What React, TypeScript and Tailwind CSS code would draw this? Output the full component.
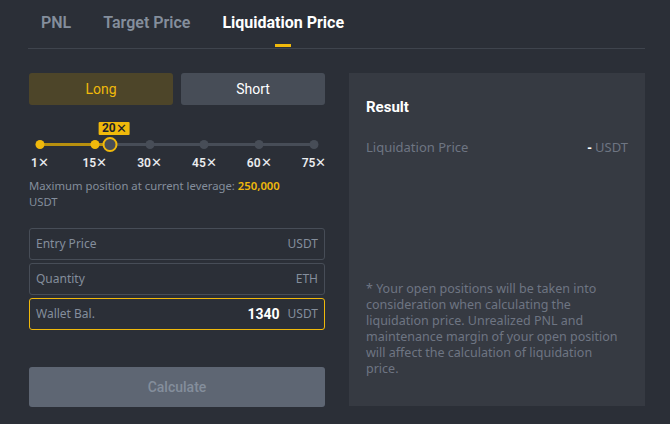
import React from "react";

const marks = [1, 15, 30, 45, 60, 75];

export default function App() {
  const pct = ((20 - 1) / 74) * 100;
  return (
    <div className="w-[670px] h-[424px] bg-[#2b2f37] overflow-hidden" style={{ fontFamily: "'Noto Sans', Roboto, sans-serif" }}>
      <div className="pl-[28px] pr-[25px]" style={{ fontFamily: "Roboto, sans-serif" }}>
        <div className="flex items-end h-[49px] border-b border-[#3f444d] pl-[13px] gap-[32px]">
          <div className="pb-[17px] text-[16px] font-semibold text-[#848e9c] leading-none">PNL</div>
          <div className="pb-[17px] text-[16px] font-semibold text-[#848e9c] leading-none">Target Price</div>
          <div className="relative pb-[17px] text-[16px] font-bold text-white leading-none">
            Liquidation Price
            <div className="absolute bottom-[1px] left-1/2 -translate-x-1/2 w-[16px] h-[3px] bg-[#f0b90b]" />
          </div>
        </div>
      </div>
      <div className="flex gap-[24px] pl-[29px] pt-[24px]">
        <div className="w-[296px] flex flex-col">
          <div className="flex gap-[8px]" style={{ fontFamily: "Roboto, sans-serif" }}>
            <div className="flex-1 h-[32px] rounded-[3px] bg-[#4d4529] text-[#f0b90b] text-[14px] flex items-center justify-center">Long</div>
            <div className="flex-1 h-[32px] rounded-[3px] bg-[#474d57] text-white text-[14px] flex items-center justify-center">Short</div>
          </div>
          <div className="relative mt-[13px] h-[44px] mx-[11px]" style={{ fontFamily: "Roboto, sans-serif" }}>
            <div className="absolute left-0 right-0 top-[25px] h-[3px] bg-[#474d57]" />
            <div className="absolute left-0 top-[25px] h-[3px] bg-[#b8900f]" style={{ width: `${pct}%` }} />
            {marks.map((m, i) => (
              <div
                key={m}
                className={`absolute top-[22px] w-[9px] h-[9px] rounded-full -translate-x-1/2 ${m <= 20 ? "bg-[#f0b90b]" : "bg-[#474d57]"}`}
                style={{ left: `${(i / 5) * 100}%` }}
              />
            ))}
            <div
              className="absolute top-[19px] w-[15px] h-[15px] rounded-full border-2 border-[#f0b90b] bg-[#474d57] -translate-x-1/2"
              style={{ left: `${pct}%` }}
            />
            <div
              className="absolute top-[4px] h-[13px] px-[3px] ml-[4px] bg-[#f0b90b] text-[#1e2329] text-[12px] font-bold leading-[13px] -translate-x-1/2 rounded-[1px] flex items-center"
              style={{ left: `${pct}%` }}
            >
              20<span className="font-normal text-[13px]">✕</span>
            </div>
            {marks.map((m, i) => (
              <div
                key={"l" + m}
                className="absolute top-[38px] text-[12px] font-semibold text-[#eaecef] leading-none -translate-x-1/2 whitespace-nowrap flex items-center"
                style={{ left: `${(i / 5) * 100}%` }}
              >
                {m}<span className="font-normal text-[13px]">✕</span>
              </div>
            ))}
          </div>
          <div className="mt-[16px] text-[11.3px] leading-[16px] text-[#848e9c]">
            Maximum position at current leverage: <span className="text-[#f0b90b] font-semibold">250,000</span>
            <br />
            USDT
          </div>
          <div className="mt-[18px] flex flex-col gap-[3px]">
            <div className="h-[32px] rounded-[3px] border border-[#474d57] flex items-center justify-between px-[6px] text-[12px] text-[#848e9c]">
              <span>Entry Price</span>
              <span>USDT</span>
            </div>
            <div className="h-[32px] rounded-[3px] border border-[#474d57] flex items-center justify-between px-[6px] text-[12px] text-[#848e9c]">
              <span>Quantity</span>
              <span>ETH</span>
            </div>
            <div className="h-[32px] rounded-[3px] border border-[#f0b90b] flex items-center justify-between px-[6px] text-[12px] text-[#848e9c]">
              <span>Wallet Bal.</span>
              <span className="flex items-center gap-[8px]">
                <span className="text-white text-[14px] font-bold" style={{ fontFamily: "Roboto, sans-serif" }}>1340</span>
                <span>USDT</span>
              </span>
            </div>
          </div>
          <div className="mt-[37px] h-[40px] rounded-[3px] bg-[#5e6673] flex items-center justify-center text-[14px] text-[#848e9c] font-medium" style={{ fontFamily: "Roboto, sans-serif" }}>
            Calculate
          </div>
        </div>
        <div className="w-[296px] h-[333px] bg-[#363a42] px-[17px] pt-[22px] flex flex-col">
          <div className="text-[15px] font-bold text-white leading-[24px]" style={{ fontFamily: "Roboto, sans-serif" }}>Result</div>
          <div className="mt-[19px] flex justify-between text-[13px] text-[#6e7582] leading-[18px]">
            <span>Liquidation Price</span>
            <span><span className="text-white font-bold">-</span> USDT</span>
          </div>
          <div className="mt-[125px] text-[12.5px] leading-[16px] text-[#6e7582] pr-[2px]">
            * Your open positions will be taken into consideration when calculating the liquidation price. Unrealized PNL and maintenance margin of your open position will affect the calculation of liquidation price.
          </div>
        </div>
      </div>
    </div>
  );
}
